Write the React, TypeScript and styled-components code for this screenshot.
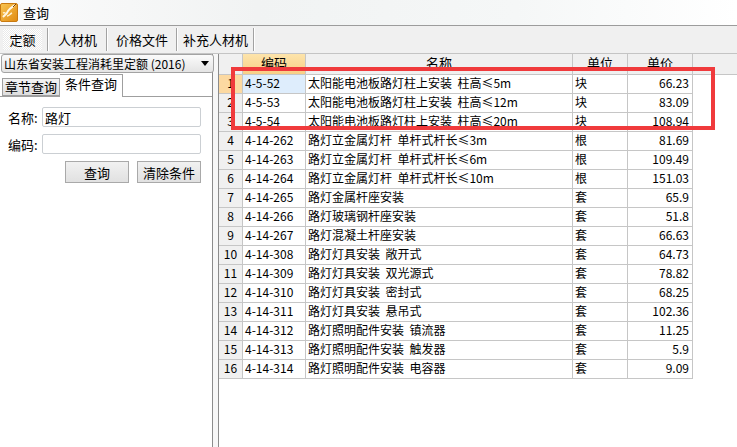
import styled, { createGlobalStyle } from 'styled-components';

const GlobalStyle = createGlobalStyle`
  html, body {
    margin: 0;
    padding: 0;
    background: #fff;
  }
  body {
    font-family: 'Noto Sans CJK SC', 'Noto Sans', sans-serif;
    font-size: 12px;
    color: #000;
  }
  * {
    box-sizing: border-box;
  }
`;

const Window = styled.div`
  position: relative;
  width: 737px;
  height: 447px;
  display: flex;
  flex-direction: column;
  overflow: hidden;
  background: #fff;
`;

const TitleBar = styled.div`
  height: 25px;
  display: flex;
  align-items: center;
  gap: 4px;
  padding-left: 0;
  background: linear-gradient(90deg, #fbfbfb 0%, #f1f3f3 35%, #f5f7f7 70%, #ffffff 100%);
  font-size: 13px;
`;

const TabBar = styled.div`
  height: 29px;
  border-top: 1px solid #9c9c9c;
  border-bottom: 1px solid #c4c4c4;
  background: #f0f0f0;
  display: flex;
  align-items: center;
  padding-left: 3px;
  font-size: 13px;
`;

const Tab = styled.div<{ $w: number; $active?: boolean }>(
  ({ $w, $active }) => `
  width: ${$w}px;
  height: 21px;
  display: flex;
  align-items: center;
  justify-content: center;
  border: 1px solid ${$active ? '#7e7e7e #ffffff #ffffff #7e7e7e' : 'transparent'};
  background: ${
    $active ? 'repeating-conic-gradient(#ffffff 0 25%, #e9e9e9 0 50%) 0 0 / 2px 2px' : 'transparent'
  };
`
);

const TabSep = styled.div<{ $gap?: number }>(
  ({ $gap = 0 }) => `
  width: 2px;
  height: 23px;
  margin-left: ${$gap}px;
  border-left: 1px solid #a2a2a2;
  border-right: 1px solid #ffffff;
`
);

const Body = styled.div`
  flex: 1;
  display: flex;
  min-height: 0;
`;

const LeftPane = styled.div`
  width: 212px;
  display: flex;
  flex-direction: column;
`;

const Dropdown = styled.div`
  position: relative;
  z-index: 1;
  width: 213px;
  height: 19px;
  margin-left: 1px;
  padding: 0 4px 0 2px;
  display: flex;
  align-items: center;
  justify-content: space-between;
  border: 1px solid #a3a3a3;
  border-radius: 3px;
  background: linear-gradient(#fbfbfb, #e4e4e4);
  white-space: pre;
`;

const Arrow = styled.span`
  width: 0;
  height: 0;
  border-left: 4px solid transparent;
  border-right: 4px solid transparent;
  border-top: 5px solid #000;
`;

const SubTabs = styled.div`
  height: 23px;
  display: flex;
  align-items: flex-end;
  padding-left: 2px;
`;

const SubTab = styled.div<{ $active?: boolean }>(
  ({ $active }) => `
  width: ${$active ? 63 : 58}px;
  height: ${$active ? 23 : 18}px;
  margin-bottom: ${$active ? -1 : 0}px;
  position: relative;
  display: flex;
  justify-content: center;
  padding-top: ${$active ? 2 : 1}px;
  line-height: 14px;
  border: 1px solid #9f9f9f;
  border-bottom: ${$active ? 'none' : '1px solid #9f9f9f'};
  border-left: ${$active ? 'none' : '1px solid #9f9f9f'};
  background: ${$active ? '#ffffff' : 'linear-gradient(#f4f4f4, #dedede)'};
  font-size: 13px;
`
);

const QueryPanel = styled.div`
  flex: 1;
  border-top: 1px solid #9f9f9f;
  background: #fff;
  padding: 10px 11px 0 8px;
  display: flex;
  flex-direction: column;
  gap: 7px;
`;

const FieldRow = styled.div`
  display: flex;
  align-items: center;
`;

const Label = styled.span`
  width: 34px;
  font-size: 13px;
`;

const Input = styled.input`
  flex: 1;
  height: 20px;
  padding: 0 2px;
  border: 1px solid #cbcfd3;
  border-radius: 2px;
  font-family: inherit;
  font-size: 13px;
  color: #000;
  outline: none;
`;

const ButtonRow = styled.div`
  display: flex;
  justify-content: flex-end;
  gap: 8px;
`;

const Button = styled.button`
  width: 64px;
  height: 22px;
  padding: 0;
  border: 1px solid #a9a9a9;
  background: linear-gradient(#f1f1f1, #e1e1e1);
  font-family: inherit;
  font-size: 13px;
  color: #000;
`;

const Splitter = styled.div`
  width: 7px;
  border-left: 1px solid #8c8c8c;
  border-right: 1px solid #8c8c8c;
  background: #f7f7f7;
`;

const GridArea = styled.div`
  flex: 1;
  overflow: hidden;
  background: #fff;
`;

const cols = '24px 63px 267px 55px 65px';

const HeaderRow = styled.div`
  height: 21px;
  display: grid;
  grid-template-columns: ${cols} 1fr;
  background: #f0f0f0;
  border-bottom: 1px solid #c6c6c6;
`;

const HeaderCell = styled.div<{ $hl?: boolean }>(
  ({ $hl }) => `
  display: flex;
  justify-content: center;
  line-height: 14px;
  padding-top: 2px;
  border-right: 1px solid #c6c6c6;
  background: ${$hl ? 'linear-gradient(#fde4ab, #f8cf86)' : 'transparent'};
  font-size: 13px;
`
);

const Row = styled.div`
  width: 474px;
  height: 19px;
  display: grid;
  grid-template-columns: ${cols};
  border-bottom: 1px solid #c6c6c6;
  line-height: 16px;
`;

const NumCell = styled.div<{ $sel?: boolean }>(
  ({ $sel }) => `
  text-align: center;
  border-right: 1px solid #c6c6c6;
  background: ${$sel ? '#fcd9a1' : '#f0f0f0'};
`
);

const Cell = styled.div<{ $sel?: boolean; $right?: boolean }>(
  ({ $sel, $right }) => `
  padding: 0 ${$right ? 3 : 2}px 0 2px;
  text-align: ${$right ? 'right' : 'left'};
  white-space: pre;
  overflow: hidden;
  border-right: 1px solid #c6c6c6;
  background: ${$sel ? '#deedfc' : 'transparent'};
`
);

const Mark = styled.div`
  position: absolute;
  left: 231px;
  top: 67px;
  width: 484px;
  height: 63px;
  border: 4px solid #f03a3c;
  pointer-events: none;
`;

const rows: [string, string, string, string][] = [
  ['4-5-52', '太阳能电池板路灯柱上安装  柱高≤5m', '块', '66.23'],
  ['4-5-53', '太阳能电池板路灯柱上安装  柱高≤12m', '块', '83.09'],
  ['4-5-54', '太阳能电池板路灯柱上安装  柱高≤20m', '块', '108.94'],
  ['4-14-262', '路灯立金属灯杆  单杆式杆长≤3m', '根', '81.69'],
  ['4-14-263', '路灯立金属灯杆  单杆式杆长≤6m', '根', '109.49'],
  ['4-14-264', '路灯立金属灯杆  单杆式杆长≤10m', '根', '151.03'],
  ['4-14-265', '路灯金属杆座安装', '套', '65.9'],
  ['4-14-266', '路灯玻璃钢杆座安装', '套', '51.8'],
  ['4-14-267', '路灯混凝土杆座安装', '套', '66.63'],
  ['4-14-308', '路灯灯具安装  敞开式', '套', '64.73'],
  ['4-14-309', '路灯灯具安装  双光源式', '套', '78.82'],
  ['4-14-310', '路灯灯具安装  密封式', '套', '68.25'],
  ['4-14-311', '路灯灯具安装  悬吊式', '套', '102.36'],
  ['4-14-312', '路灯照明配件安装  镇流器', '套', '11.25'],
  ['4-14-313', '路灯照明配件安装  触发器', '套', '5.9'],
  ['4-14-314', '路灯照明配件安装  电容器', '套', '9.09']
];

function AppIcon() {
  return (
    <svg width="19" height="21" viewBox="0 0 19 21">
      <defs>
        <linearGradient id="ico" x1="0" y1="0" x2="1" y2="1">
          <stop offset="0" stopColor="#f9c552" />
          <stop offset="1" stopColor="#e08a12" />
        </linearGradient>
      </defs>
      <rect x="0.5" y="1.5" width="17" height="18" rx="1.5" fill="url(#ico)" stroke="#c97a10" />
      <path d="M3 15 C5 13 7 12 8 9 C9 7 11 6 15 3" stroke="#fff8e6" strokeWidth="2" fill="none" />
      <path d="M3 11 C5 10 6 11 5 13 M7 14 C9 14 10 12 12 11" stroke="#fff3d6" strokeWidth="1.4" fill="none" />
      <path d="M13 5 L16 2" stroke="#7a3f00" strokeWidth="1" />
    </svg>
  );
}

export default function App() {
  return (
    <Window>
      <GlobalStyle />
      <TitleBar>
        <AppIcon />
        <span>查询</span>
      </TitleBar>
      <TabBar>
        <Tab $w={39} $active>
          定额
        </Tab>
        <TabSep $gap={5} />
        <Tab $w={57}>人材机</Tab>
        <TabSep />
        <Tab $w={68}>价格文件</Tab>
        <TabSep />
        <Tab $w={75}>补充人材机</Tab>
        <TabSep />
      </TabBar>
      <Body>
        <LeftPane>
          <Dropdown>
            <span>山东省安装工程消耗里定额 (2016)</span>
            <Arrow />
          </Dropdown>
          <SubTabs>
            <SubTab>章节查询</SubTab>
            <SubTab $active>条件查询</SubTab>
          </SubTabs>
          <QueryPanel>
            <FieldRow>
              <Label>名称:</Label>
              <Input defaultValue="路灯" />
            </FieldRow>
            <FieldRow>
              <Label>编码:</Label>
              <Input defaultValue="" />
            </FieldRow>
            <ButtonRow>
              <Button>查询</Button>
              <Button>清除条件</Button>
            </ButtonRow>
          </QueryPanel>
        </LeftPane>
        <Splitter />
        <GridArea>
          <HeaderRow>
            <HeaderCell />
            <HeaderCell $hl>编码</HeaderCell>
            <HeaderCell>名称</HeaderCell>
            <HeaderCell>单位</HeaderCell>
            <HeaderCell>单价</HeaderCell>
            <div />
          </HeaderRow>
          {rows.map(([code, name, unit, price], i) => (
            <Row key={code}>
              <NumCell $sel={i === 0}>{i + 1}</NumCell>
              <Cell $sel={i === 0}>{code}</Cell>
              <Cell>{name}</Cell>
              <Cell>{unit}</Cell>
              <Cell $right>{price}</Cell>
            </Row>
          ))}
        </GridArea>
      </Body>
      <Mark />
    </Window>
  );
}
